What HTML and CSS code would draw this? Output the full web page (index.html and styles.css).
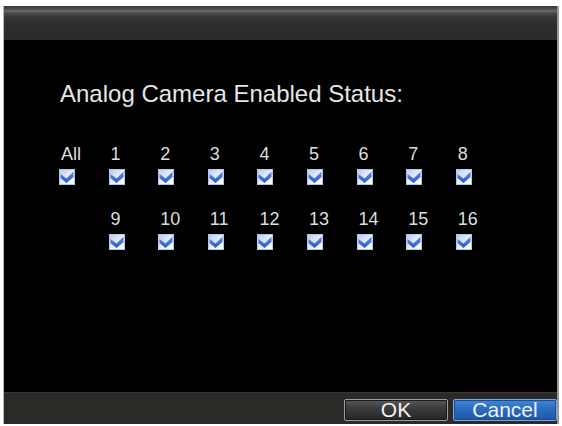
FILE: index.html
```html
<!DOCTYPE html>
<html>
<head>
  <title>Analog Camera Enabled Status</title>
  <link rel="stylesheet" href="styles.css">
</head>
<body>
  <div class="screen">
    <div class="titlebar"></div>

    <div class="content">
      <div class="heading">Analog Camera Enabled Status:</div>

      <div class="cams">
        <!-- row 1 -->
        <div class="cam"><span class="lbl">All</span><span class="chk"></span></div>
        <div class="cam"><span class="lbl">1</span><span class="chk"></span></div>
        <div class="cam"><span class="lbl">2</span><span class="chk"></span></div>
        <div class="cam"><span class="lbl">3</span><span class="chk"></span></div>
        <div class="cam"><span class="lbl">4</span><span class="chk"></span></div>
        <div class="cam"><span class="lbl">5</span><span class="chk"></span></div>
        <div class="cam"><span class="lbl">6</span><span class="chk"></span></div>
        <div class="cam"><span class="lbl">7</span><span class="chk"></span></div>
        <div class="cam"><span class="lbl">8</span><span class="chk"></span></div>
        <!-- row 2 -->
        <div class="cam skip"><span class="lbl">9</span><span class="chk"></span></div>
        <div class="cam"><span class="lbl">10</span><span class="chk"></span></div>
        <div class="cam"><span class="lbl">11</span><span class="chk"></span></div>
        <div class="cam"><span class="lbl">12</span><span class="chk"></span></div>
        <div class="cam"><span class="lbl">13</span><span class="chk"></span></div>
        <div class="cam"><span class="lbl">14</span><span class="chk"></span></div>
        <div class="cam"><span class="lbl">15</span><span class="chk"></span></div>
        <div class="cam"><span class="lbl">16</span><span class="chk"></span></div>
      </div>
    </div>

    <div class="footer">
      <button type="button" class="btn">OK</button>
      <button type="button" class="btn active">Cancel</button>
    </div>
  </div>
</body>
</html>
```

FILE: styles.css
```css
body {
  margin: 0;
  background: #fff;
  font-family: "Liberation Sans", Arial, sans-serif;
}

.screen {
  margin: 6px 0 0 3px;
  width: 553px;
  border-left: 1px solid #b8b8b8;
  border-right: 2px solid #9a9a9a;
  background: #000;
}

.titlebar {
  height: 34px;
  background: linear-gradient(#3a3a3a 0, #4a4a4a 3px, #6e6e6e 5px, #4a4a4a 7px, #353533 12px, #2d2d2b 20px, #2b2b29 100%);
}

.content {
  height: 352px;
  padding: 40px 0 0 0;
  box-sizing: border-box;
}

.heading {
  padding-left: 56px;
  font-size: 24px;
  line-height: 28px;
  color: #e6e6e6;
}

.cams {
  margin-top: 36px;
  padding-left: 55px;
  display: grid;
  grid-template-columns: repeat(9, 49.6px);
  row-gap: 24px;
}

.cam {
  display: flex;
  flex-direction: column;
  align-items: flex-start;
  gap: 5px;
}

.cam.skip {
  grid-column-start: 2;
}

.lbl {
  padding-left: 2px;
  font-size: 18px;
  line-height: 20px;
  color: #dedede;
}

.chk {
  width: 16px;
  height: 16px;
  box-sizing: border-box;
  border: 1px solid #b7c7e2;
  background:
    url("data:image/svg+xml;utf8,<svg xmlns='http://www.w3.org/2000/svg' viewBox='0 0 16 16'><defs><linearGradient id='g' x1='0' y1='0' x2='0' y2='1'><stop offset='0' stop-color='%235b8ef0'/><stop offset='1' stop-color='%232a56c4'/></linearGradient></defs><path d='M1.5 5 L7.5 9.5 L14.5 2.5 L14.5 8 L7.5 14 L1.5 9 Z' fill='url(%23g)'/></svg>") center / 16px 16px no-repeat,
    linear-gradient(135deg, #b9cbf0 0%, #e6eefb 50%, #ffffff 100%);
}

.footer {
  height: 32px;
  background: #2c2a27;
  display: flex;
  justify-content: flex-end;
  align-items: center;
  gap: 5px;
  padding: 2px 0 0 0;
  box-sizing: border-box;
  border-top: 1px solid #3a3835;
}

.btn {
  width: 104px;
  height: 22px;
  padding: 0;
  font-family: "Liberation Sans", Arial, sans-serif;
  font-size: 21px;
  line-height: 20px;
  color: #f2f2f2;
  border: 1px solid #9c9c9c;
  border-radius: 2px;
  background: linear-gradient(#5a5a5a 0, #3c3c3c 40%, #262626 100%);
  box-shadow: inset 0 0 0 1px #1a1a1a;
}

.btn.active {
  border-color: #7fa6de;
  background: linear-gradient(#3f86d8 0, #2a6cc2 45%, #1f56a6 100%);
  box-shadow: inset 0 0 0 1px #1d4b8c;
}
```
